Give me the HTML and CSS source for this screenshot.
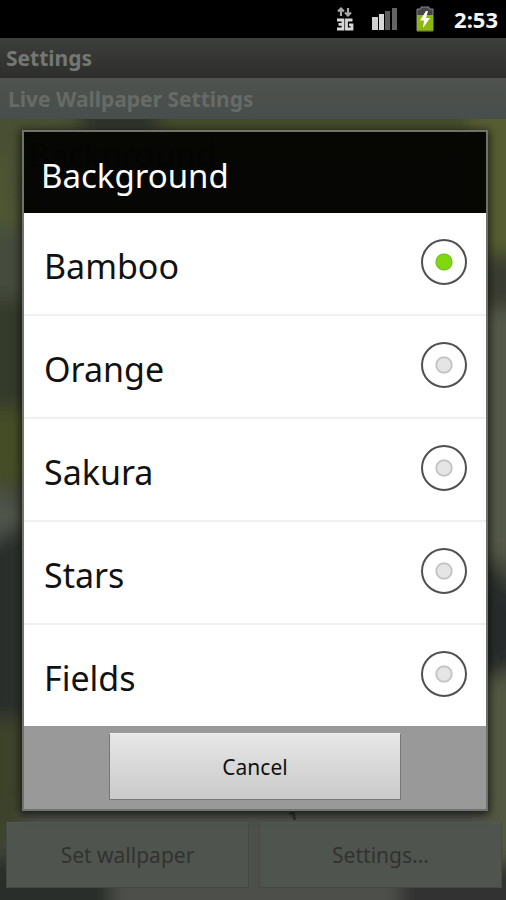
FILE: index.html
```html
<!DOCTYPE html>
<html lang="en">
<head>
<meta charset="utf-8">
<meta name="viewport" content="width=device-width, initial-scale=1">
<title>Live Wallpaper Settings</title>
<link rel="stylesheet" href="styles.css">
</head>
<body>
<div class="screen">
  <header class="status-bar">
    <svg class="icon-network" viewBox="0 0 18 24" width="18" height="24" aria-hidden="true">
      <path d="M5 9V2M2 4.500L5 1.500L8 4.500M12 1V8M9 5.500L12 8.500L15 5.500" fill="none" stroke="#a8a8a8" stroke-width="2.200"/>
      <path d="M1 13H7V22H1M2.500 17.300H7M16.500 13H10.500V22H16V17.800H13" fill="none" stroke="#d8d8d8" stroke-width="2.800"/>
    </svg>
    <svg class="icon-signal" viewBox="0 0 26 24" width="26" height="24" aria-hidden="true">
      <path d="M0 10H6V23H0z" fill="#d0d0d0"/>
      <path d="M7 7H12V23H7z" fill="#d8d8d8"/>
      <path d="M13 4H18V23H13z" fill="#5c5c5c"/>
      <path d="M20 1H25V23H20z" fill="#646464"/>
    </svg>
    <svg class="icon-battery" viewBox="0 0 18 26" width="18" height="26" aria-hidden="true">
      <path d="M5 3V1H13V3H17V25H1V3z" fill="#454545" stroke="#888" stroke-width="1"/>
      <path d="M1 9H17V24.500H1z" fill="#8ab80c"/>
      <path d="M10 5L4 14.500H8L7 22L14 12H10L12 5z" fill="#fff"/>
    </svg>
    <time class="clock">2:53</time>
  </header>
  <div class="title-bar">Settings</div>
  <h1 class="category">Live Wallpaper Settings</h1>
  <main class="wallpaper">
    <svg class="scene" viewBox="0 0 506 782" preserveAspectRatio="none" aria-hidden="true">
      <defs><filter id="soft" x="-30%" y="-30%" width="160%" height="160%"><feGaussianBlur stdDeviation="9"/></filter></defs>
      <rect width="506" height="782" fill="#43483a"/>
      <g filter="url(#soft)">
        <path d="M-40 -30H80V12L24 30V60H-40z" fill="#4a5030"/>
        <path d="M80 -30H160V14H80z" fill="#2f312a"/>
        <path d="M160 -30H470V20H160z" fill="#454b2c"/>
        <path d="M470 -30H550V150H470z" fill="#565d32"/>
        <path d="M-40 40H8L24 110H-40z" fill="#4e5733"/>
        <path d="M-40 110H30V180H-40z" fill="#454c3e"/>
        <path d="M-40 180H30V290H-40z" fill="#353a2b"/>
        <path d="M-40 290H30V365H-40z" fill="#454d25"/>
        <path d="M-40 350L24 390V440H-40z" fill="#50554c"/>
        <path d="M-40 440L26 405V600H-40z" fill="#2c2e2b"/>
        <path d="M-40 600H26V725H-40z" fill="#3d432a"/>
        <path d="M480 135H550V210H480z" fill="#3b3e30"/>
        <path d="M480 190H550V440H480z" fill="#54594a"/>
        <path d="M480 430L506 470L550 480V520L480 565z" fill="#252a2a"/>
        <path d="M480 560H550V750H480z" fill="#535842"/>
        <path d="M24 685H480V830H24z" fill="#4d504b"/>
        <path d="M-40 740H112V830H-40z" fill="#2c2e2c"/>
        <path d="M400 745H550V830H400z" fill="#303331"/>
      </g>
      <path d="M289 694H295L296 702H293L292 697H289z" fill="#31332f"/>
    </svg>
    <p class="preference">Background</p>
    <div class="actions">
      <button class="action" type="button">Set wallpaper</button>
      <button class="action" type="button">Settings...</button>
    </div>
  </main>
  <form class="dialog" role="dialog" aria-labelledby="dialog-title">
    <h2 class="dialog-title" id="dialog-title">Background</h2>
    <div class="options">
      <label class="option"><span class="option-name">Bamboo</span><input class="radio" type="radio" name="background" checked></label>
      <label class="option"><span class="option-name">Orange</span><input class="radio" type="radio" name="background"></label>
      <label class="option"><span class="option-name">Sakura</span><input class="radio" type="radio" name="background"></label>
      <label class="option"><span class="option-name">Stars</span><input class="radio" type="radio" name="background"></label>
      <label class="option"><span class="option-name">Fields</span><input class="radio" type="radio" name="background"></label>
    </div>
    <div class="dialog-footer">
      <button class="cancel" type="button">Cancel</button>
    </div>
  </form>
</div>
</body>
</html>
```
FILE: styles.css
```css
* {
  box-sizing: border-box;
}

body {
  margin: 0;
  background: #000;
  font-family: "Noto Sans", "Open Sans", sans-serif;
}

.screen {
  position: relative;
  display: flex;
  flex-direction: column;
  min-height: 100vh;
}

.status-bar {
  display: flex;
  align-items: center;
  justify-content: flex-end;
  height: 38px;
  padding-right: 8px;
  background: #000;
}

.icon-network {
  margin-right: 18px;
}

.icon-signal {
  margin-right: 18px;
}

.icon-battery {
  margin-right: 20px;
}

.clock {
  color: #f4f4f4;
  font-size: 22px;
  font-weight: 700;
  line-height: 38px;
}

.title-bar {
  height: 40px;
  padding: 0 6px;
  background: linear-gradient(#3d3f3c, #2d2e2b);
  color: #747773;
  font-size: 21px;
  font-weight: 700;
  line-height: 40px;
}

.category {
  height: 41px;
  margin: 0;
  padding: 0 8px;
  background: linear-gradient(#4f524e, #474e4c);
  color: #666b67;
  font-size: 21px;
  font-weight: 700;
  line-height: 42px;
}

.wallpaper {
  position: relative;
  display: flex;
  flex: 1;
  flex-direction: column;
  justify-content: space-between;
}

.scene {
  position: absolute;
  inset: 0;
  width: 100%;
  height: 100%;
}

.preference {
  position: relative;
  margin: 12px 28px;
  color: #000;
  font-size: 33px;
  line-height: 48px;
}

.actions {
  position: relative;
  display: flex;
  gap: 10px;
  padding: 0 4px 12px 6px;
}

.action {
  flex: 1;
  height: 66px;
  padding: 0;
  border: 1px solid #464a45;
  border-top-color: #555954;
  background: #50544f;
  color: #30332f;
  font: 21px "Noto Sans", "Open Sans", sans-serif;
}

.dialog {
  position: absolute;
  top: 130px;
  right: 18px;
  left: 22px;
  border: 2px solid #70726e;
  box-shadow: 0 2px 8px 2px rgba(0, 0, 0, 0.6);
}

.dialog-title {
  height: 81px;
  margin: 0;
  padding: 0 17px;
  background: rgba(4, 4, 2, 0.97);
  color: #fff;
  font-size: 33px;
  font-weight: 400;
  line-height: 88px;
}

.options {
  background: #fff;
}

.option {
  display: flex;
  align-items: center;
  justify-content: space-between;
  height: 103px;
  padding: 0 19px 4px 20px;
  border-bottom: 2px solid #f0f0f0;
  color: #111;
  font-size: 34px;
}

.option:last-child {
  height: 101px;
  border-bottom: 0;
}

.option-name {
  padding-top: 8px;
}

.radio {
  width: 46px;
  height: 46px;
  margin: 0;
  border: 2px solid #505050;
  border-radius: 50%;
  appearance: none;
  background: radial-gradient(circle, #e5e5e5 6px, #bababa 8px, #fff 9px);
}

.radio:checked {
  background: radial-gradient(circle, #80d810 7px, #76b820 8px, #fff 9px);
}

.dialog-footer {
  display: flex;
  justify-content: center;
  padding: 7px 0 9px;
  background: #999;
}

.cancel {
  width: 63%;
  height: 67px;
  padding: 0;
  border: 1px solid #777;
  border-top-color: #eee;
  background: linear-gradient(#e6e6e6, #cacaca);
  color: #111;
  font: 21px "Noto Sans", "Open Sans", sans-serif;
}
```
